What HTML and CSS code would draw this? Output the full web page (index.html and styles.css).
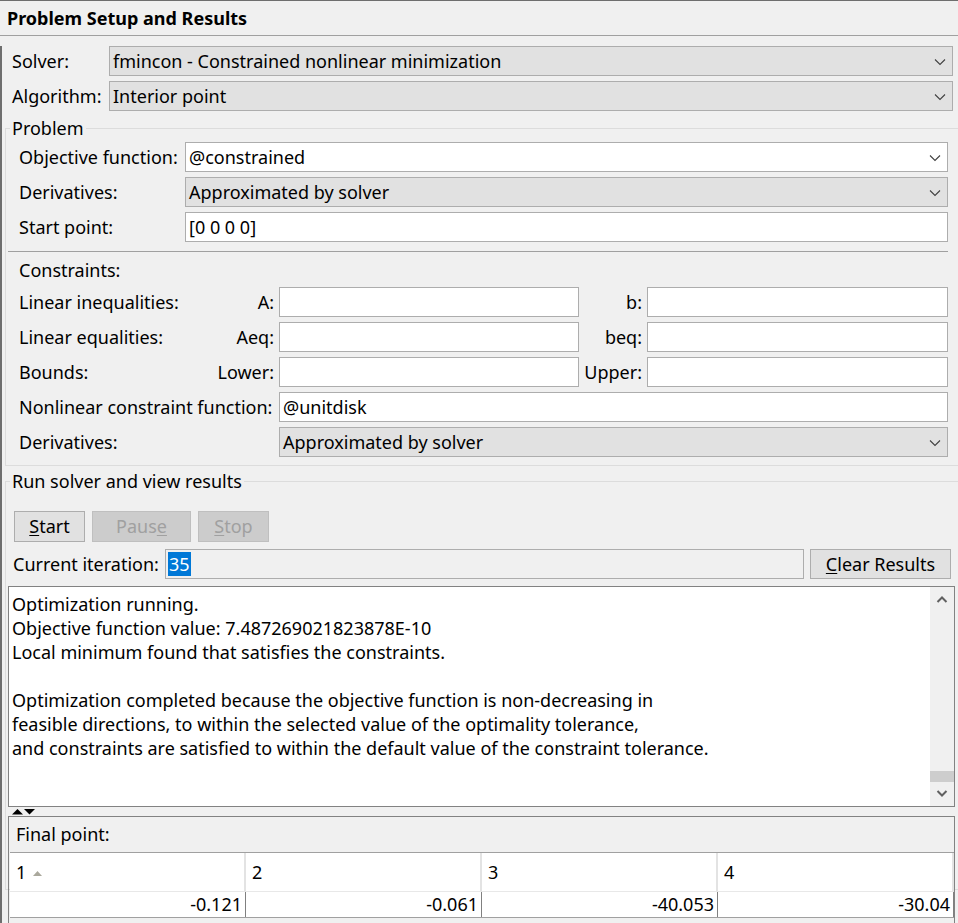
FILE: index.html
```html
<!DOCTYPE html>
<html>
<head>
<meta charset="utf-8">
<link rel="stylesheet" href="styles.css">
</head>
<body>
<div class="titlebar">Problem Setup and Results</div>
<div class="main">
  <div class="toprow">
    <span class="toplbl">Solver:</span>
    <div class="field select">fmincon - Constrained nonlinear minimization<svg class="chev" width="12" height="8" viewBox="0 0 12 8"><polyline points="1,1.5 6,6.5 11,1.5" fill="none" stroke="#404040" stroke-width="1.1"/></svg></div>
  </div>
  <div class="toprow">
    <span class="toplbl">Algorithm:</span>
    <div class="field select">Interior point<svg class="chev" width="12" height="8" viewBox="0 0 12 8"><polyline points="1,1.5 6,6.5 11,1.5" fill="none" stroke="#404040" stroke-width="1.1"/></svg></div>
  </div>

  <fieldset class="group problem">
    <legend>Problem</legend>
    <div class="prow first">
      <span class="plbl">Objective function:</span>
      <div class="field input combo">@constrained<svg class="chev" width="12" height="8" viewBox="0 0 12 8"><polyline points="1,1.5 6,6.5 11,1.5" fill="none" stroke="#404040" stroke-width="1.1"/></svg></div>
    </div>
    <div class="prow">
      <span class="plbl">Derivatives:</span>
      <div class="field select">Approximated by solver<svg class="chev" width="12" height="8" viewBox="0 0 12 8"><polyline points="1,1.5 6,6.5 11,1.5" fill="none" stroke="#404040" stroke-width="1.1"/></svg></div>
    </div>
    <div class="prow">
      <span class="plbl">Start point:</span>
      <div class="field input">[0 0 0 0]</div>
    </div>
    <div class="sep"></div>
    <div class="ctitle">Constraints:</div>
    <div class="crow first">
      <div class="clbl"><span>Linear inequalities:</span><span>A:</span></div>
      <div class="field input half"></div>
      <span class="clbl2">b:</span>
      <div class="field input"></div>
    </div>
    <div class="crow">
      <div class="clbl"><span>Linear equalities:</span><span>Aeq:</span></div>
      <div class="field input half"></div>
      <span class="clbl2">beq:</span>
      <div class="field input"></div>
    </div>
    <div class="crow">
      <div class="clbl"><span>Bounds:</span><span>Lower:</span></div>
      <div class="field input half"></div>
      <span class="clbl2">Upper:</span>
      <div class="field input"></div>
    </div>
    <div class="crow">
      <div class="clbl"><span>Nonlinear constraint function:</span></div>
      <div class="field input">@unitdisk</div>
    </div>
    <div class="crow">
      <div class="clbl"><span>Derivatives:</span></div>
      <div class="field select">Approximated by solver<svg class="chev" width="12" height="8" viewBox="0 0 12 8"><polyline points="1,1.5 6,6.5 11,1.5" fill="none" stroke="#404040" stroke-width="1.1"/></svg></div>
    </div>
  </fieldset>

  <fieldset class="group run">
    <legend>Run solver and view results</legend>
    <div class="buttons">
      <div class="btn start"><u>S</u>tart</div>
      <div class="btn disabled pause">Paus<u>e</u></div>
      <div class="btn disabled stop"><u>S</u>top</div>
    </div>
    <div class="iterrow">
      <span class="iterlbl">Current iteration:</span>
      <div class="field iterfield"><span class="selected">35</span></div>
      <div class="btn clear"><u>C</u>lear Results</div>
    </div>
    <div class="output">
      <div class="outtext">
        <div>Optimization running.</div>
        <div>Objective function value: 7.487269021823878E-10</div>
        <div>Local minimum found that satisfies the constraints.</div>
        <div>&nbsp;</div>
        <div>Optimization completed because the objective function is non-decreasing in</div>
        <div>feasible directions, to within the selected value of the optimality tolerance,</div>
        <div>and constraints are satisfied to within the default value of the constraint tolerance.</div>
      </div>
      <div class="scrollbar">
        <div class="sarrow up"><svg width="12" height="8" viewBox="0 0 12 8"><polyline points="1.5,7 6,2.5 10.5,7" fill="none" stroke="#606060" stroke-width="2"/></svg></div>
        <div class="track"><div class="thumb"></div></div>
        <div class="sarrow down"><svg width="12" height="8" viewBox="0 0 12 8"><polyline points="1.5,1 6,5.5 10.5,1" fill="none" stroke="#606060" stroke-width="2"/></svg></div>
      </div>
    </div>
    <div class="splitter"><svg width="26" height="7" viewBox="0 0 26 7"><polygon points="0,6.5 5.5,1 11,6.5" fill="#000"/><polygon points="12,1 23,1 17.5,6.5" fill="#000"/></svg></div>
    <div class="final">
      <div class="ftitle">Final point:</div>
      <div class="table">
        <div class="th">1 <svg class="sort" width="9" height="5" viewBox="0 0 9 5"><polygon points="0,5 4.5,0 9,5" fill="#aaa89c"/></svg></div>
        <div class="th">2</div>
        <div class="th">3</div>
        <div class="th">4</div>
        <div class="td">-0.121</div>
        <div class="td">-0.061</div>
        <div class="td">-40.053</div>
        <div class="td">-30.04</div>
      </div>
    </div>
  </fieldset>
</div>
</body>
</html>
```
FILE: styles.css
```css
* { box-sizing: border-box; }
html, body { margin: 0; padding: 0; }
body {
  width: 958px;
  height: 923px;
  overflow: hidden;
  background: #f0f0f0;
  font-family: "Noto Sans", "Open Sans", sans-serif;
  font-size: 18px;
  color: #000;
}
.titlebar {
  height: 36px;
  border-top: 1px solid #6e6e6e;
  border-bottom: 1px solid #a0a0a0;
  font-weight: bold;
  font-size: 18px;
  line-height: 34px;
  padding-left: 7px;
}
.main {
  height: 887px;
  border-left: 2px solid #6e6e6e;
  padding-left: 3px;
}
.toprow {
  display: flex;
  align-items: center;
  margin: 5px 5px 0 7px;
}
.toprow:first-child { margin-top: 10px; }
.toplbl { width: 97px; flex: none; }
.field {
  height: 30px;
  border: 1px solid #adadad;
  line-height: 28px;
  padding-left: 3px;
  flex: 1;
  position: relative;
  white-space: nowrap;
}
.select { background: #e1e1e1; }
.input { background: #fff; }
.chev { position: absolute; right: 6px; top: 11px; }

.group {
  margin: 0;
  padding: 0;
  border: 1px solid #dcdcdc;
  border-right: none;
  min-width: 0;
}
.group legend {
  margin-left: 4px;
  padding: 0 2px;
  line-height: 22px;
  font-size: 18px;
}
.problem { margin-top: 6px; padding-bottom: 8px; }
.prow {
  display: flex;
  align-items: center;
  margin: 5px 10px 0 13px;
}
.prow.first { margin-top: 3px; }
.plbl { width: 166px; flex: none; white-space: nowrap; }
.sep {
  height: 1px;
  background: #a0a0a0;
  margin: 9px 10px 0 2px;
}
.ctitle {
  line-height: 22px;
  margin: 7px 0 0 13px;
}
.crow {
  display: flex;
  align-items: center;
  gap: 5px;
  margin: 5px 10px 0 13px;
}
.crow.first { margin-top: 6px; }
.clbl {
  width: 255px;
  flex: none;
  display: flex;
  justify-content: space-between;
  white-space: nowrap;
}
.half { flex: none; width: 300px; }
.clbl2 { width: 58px; flex: none; text-align: right; }

.run { margin-top: 4px; height: 420px; }
.buttons {
  display: flex;
  gap: 7px;
  margin: 19px 0 0 8px;
}
.btn {
  height: 31px;
  border: 1px solid #adadad;
  background: #e1e1e1;
  text-align: center;
  line-height: 29px;
}
.btn u { text-underline-offset: 2px; }
.btn.disabled {
  background: #cccccc;
  border-color: #bfbfbf;
  color: #a0a0a0;
}
.start { width: 71px; }
.pause { width: 99px; }
.stop { width: 71px; }
.iterrow {
  display: flex;
  align-items: center;
  margin: 7px 0 0 7px;
}
.iterlbl { width: 152px; flex: none; white-space: nowrap; }
.iterfield {
  flex: none;
  width: 639px;
  background: #f0f0f0;
  padding-left: 2px;
  line-height: 26px;
  padding-top: 1px;
}
.selected { background: #0078d7; color: #fff; display: inline-block; padding: 0 1px; line-height: 24px; }
.clear {
  width: 141px;
  height: 30px;
  line-height: 28px;
  margin-left: 6px;
}
.output {
  display: flex;
  height: 221px;
  margin: 7px 3px 0 2px;
  border: 1px solid #828282;
  background: #fff;
}
.outtext {
  flex: 1;
  padding: 5px 0 0 3px;
  line-height: 24px;
  white-space: nowrap;
  overflow: hidden;
}
.scrollbar {
  width: 24px;
  flex: none;
  background: #f0f0f0;
  display: flex;
  flex-direction: column;
}
.sarrow { height: 24px; display: flex; align-items: center; justify-content: center; }
.track { flex: 1; display: flex; flex-direction: column; justify-content: flex-end; }
.thumb { height: 11px; background: #cdcdcd; }
.splitter { height: 9px; padding: 1px 0 0 6px; line-height: 0; }
.final {
  margin: 0 3px 0 2px;
  border: 1px solid #828282;
  border-bottom: none;
  height: 110px;
}
.ftitle {
  height: 35px;
  line-height: 35px;
  padding-left: 7px;
}
.table {
  display: grid;
  grid-template-columns: 1fr 1fr 1fr 1fr;
  margin-left: 1px;
  border-top: 1px solid #a0a0a0;
  background: #fff;
  border-bottom: 1px solid #a0a0a0;
}
.th {
  height: 39px;
  line-height: 38px;
  padding-left: 6px;
  border-right: 2px solid #e3e3e3;
  border-bottom: 1px solid #e8e8e8;
}
.sort { vertical-align: 3px; margin-left: 2px; }
.td {
  height: 25px;
  line-height: 24px;
  text-align: right;
  padding-right: 3px;
  border-right: 1px solid #808080;
}
```
